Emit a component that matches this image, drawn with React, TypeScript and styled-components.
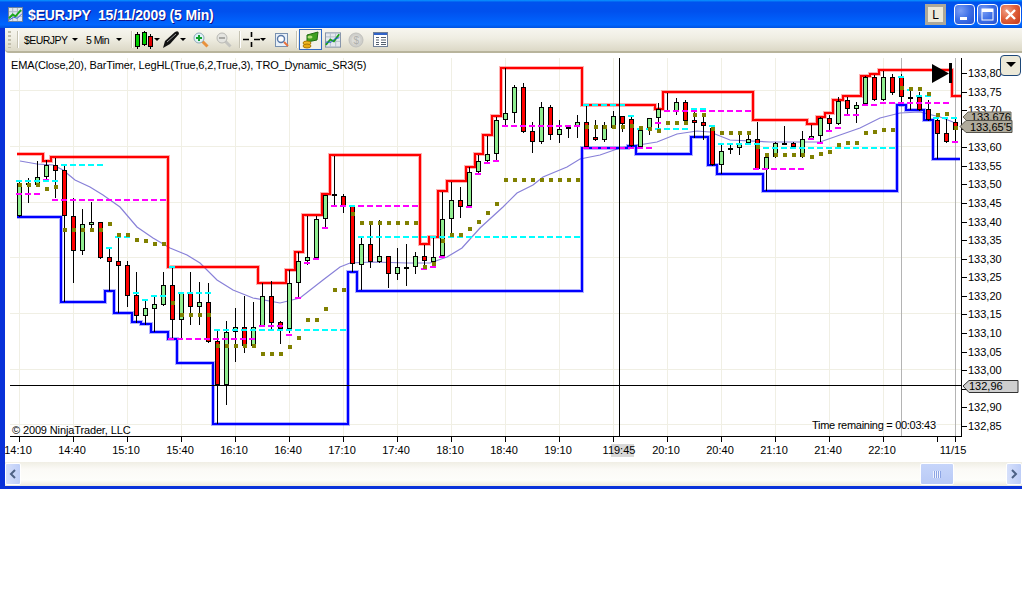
import React from 'react';
import styled, { createGlobalStyle } from 'styled-components';

const GlobalStyle = createGlobalStyle`
  html, body {
    margin: 0;
    background: #fff;
    font-family: "Liberation Sans", Arial, sans-serif;
  }
`;

const Window = styled.div`
  width: 1022px;
  height: 489px;
  box-sizing: border-box;
  display: flex;
  flex-direction: column;
  background: #0831d9;
  border-bottom: 3px solid #0831d9;
  overflow: hidden;
`;

const TitleBar = styled.div`
  height: 28px;
  flex: none;
  display: flex;
  align-items: center;
  padding: 1px 1px 0 8px;
  box-sizing: border-box;
  background: linear-gradient(180deg, #0997ff 0, #0053ee 8%, #0050ee 40%, #0066ff 88%, #0053e0 100%);
`;

const Title = styled.div`
  margin-left: 5px;
  flex: 1;
  color: #fff;
  font-size: 14px;
  font-weight: bold;
  letter-spacing: -0.15px;
  white-space: pre;
  text-shadow: 1px 1px 0 #0f1089;
`;

const LinkButton = styled.div`
  width: 21px;
  height: 21px;
  box-sizing: border-box;
  margin-right: 6px;
  border: 3px solid #aca899;
  background: #ece9d8;
  color: #000;
  font-size: 12px;
  display: flex;
  align-items: center;
  justify-content: center;
`;

const CaptionButton = styled.div<{ $close?: boolean }>`
  width: 21px;
  height: 21px;
  box-sizing: border-box;
  margin-left: 2px;
  border: 1px solid #fff;
  border-radius: 4px;
  background: ${(p) =>
    p.$close
      ? 'radial-gradient(circle at 30% 30%, #f0a088 0, #e0623c 45%, #c2371a 100%)'
      : 'radial-gradient(circle at 30% 30%, #7a9ef5 0, #3c6ee6 50%, #2450cf 100%)'};
  display: flex;
  align-items: center;
  justify-content: center;
`;

const Body = styled.div`
  flex: 1;
  margin-left: 5px;
  display: flex;
  flex-direction: column;
  background: #fff;
  min-height: 0;
`;

const Toolbar = styled.div`
  height: 25px;
  flex: none;
  box-sizing: border-box;
  display: flex;
  align-items: center;
  padding-left: 3px;
  border-bottom: 2px solid #b8b49c;
  border-bottom-left-radius: 4px;
  background: linear-gradient(180deg, #f7f6f0 0, #efede2 45%, #dcd8c6 100%);
  font-size: 10.5px;
  letter-spacing: -0.55px;
  color: #000;
`;

const Grip = styled.div`
  width: 3px;
  height: 17px;
  margin-right: 6px;
  background: repeating-linear-gradient(180deg, #c1bdab 0 2px, transparent 2px 4px);
`;

const Separator = styled.div<{ $gap: number }>`
  width: 1px;
  height: 17px;
  flex: none;
  margin-left: ${(p) => p.$gap}px;
  background: #c5c2b2;
  box-shadow: 1px 0 0 #fff;
`;

const Combo = styled.div<{ $left: number; $width: number }>`
  margin-left: ${(p) => p.$left}px;
  width: ${(p) => p.$width}px;
  flex: none;
  display: flex;
  align-items: center;
  justify-content: space-between;
  white-space: nowrap;
`;

const Caret = styled.span`
  width: 0;
  height: 0;
  flex: none;
  border-left: 3px solid transparent;
  border-right: 3px solid transparent;
  border-top: 3px solid #000;
`;

const ToolIcon = styled.div<{ $left: number; $width: number; $active?: boolean }>`
  margin-left: ${(p) => p.$left}px;
  width: ${(p) => p.$width}px;
  height: 21px;
  flex: none;
  box-sizing: border-box;
  display: flex;
  align-items: center;
  justify-content: center;
  border: ${(p) => (p.$active ? '1px solid #316ac5' : 'none')};
  background: ${(p) => (p.$active ? '#f3f1e8' : 'transparent')};
`;

const ChartPanel = styled.div`
  position: relative;
  flex: 1;
  min-height: 0;
`;

const ChartSvg = styled.svg`
  display: block;
  width: 1017px;
  height: 409px;
  font-family: "Liberation Sans", Arial, sans-serif;
  font-size: 11px;
`;

const ScrollMenu = styled.div`
  position: absolute;
  right: 1px;
  top: 2px;
  width: 21px;
  height: 21px;
  box-sizing: border-box;
  border: 1px solid #1d4778;
  border-radius: 4px;
  background: #ece9d8;
  display: flex;
  align-items: center;
  justify-content: center;
  &::after {
    content: '';
    border-left: 5px solid transparent;
    border-right: 5px solid transparent;
    border-top: 5px solid #000;
    margin-bottom: 2px;
  }
`;

const ScrollBar = styled.div`
  height: 24px;
  flex: none;
  display: flex;
  align-items: center;
  background: linear-gradient(180deg, #f0eee4 0, #fbfaf6 30%, #fdfdfa 75%, #ece9dc 100%);
`;

const ScrollButton = styled.div`
  width: 16px;
  height: 22px;
  box-sizing: border-box;
  flex: none;
  border: 1px solid #fff;
  border-radius: 2px;
  background: linear-gradient(90deg, #d6e0fb 0, #bdcdf7 100%);
  display: flex;
  align-items: center;
  justify-content: center;
`;

const ScrollTrack = styled.div`
  flex: 1;
  height: 100%;
  display: flex;
  align-items: center;
  justify-content: flex-end;
  padding-right: 52px;
`;

const Thumb = styled.div`
  width: 34px;
  height: 22px;
  box-sizing: border-box;
  border: 1px solid #fff;
  border-radius: 2px;
  background: linear-gradient(180deg, #c6d5fa 0, #b9caf6 100%);
  display: flex;
  align-items: center;
  justify-content: center;
`;

const ThumbGrip = styled.div`
  width: 8px;
  height: 7px;
  background: repeating-linear-gradient(90deg, #eef2fe 0 1px, #8ba4e4 1px 2px);
`;

type Candle = [number, number, number, number, 'g' | 'r'];

// high, body top, body bottom, low, colour; one bar every 9px from x=19.5
const candles: Candle[] = [
  [181, 183, 216, 217, 'g'], [178, 183, 184, 203, 'g'], [161, 177, 185, 187, 'g'], [160, 165, 177, 180, 'g'],
  [158, 165, 171, 198, 'r'], [166, 170, 216, 302, 'r'], [198, 216, 251, 283, 'r'], [209, 224, 251, 255, 'g'],
  [202, 222, 225, 230, 'g'], [222, 222, 258, 259, 'r'], [248, 257, 262, 291, 'r'], [237, 261, 266, 313, 'r'],
  [261, 265, 296, 307, 'r'], [272, 295, 316, 323, 'r'], [300, 308, 316, 325, 'g'], [296, 304, 309, 332, 'g'],
  [272, 285, 305, 306, 'g'], [267, 285, 320, 339, 'r'], [292, 293, 320, 339, 'g'], [272, 293, 307, 325, 'r'],
  [282, 302, 307, 325, 'g'], [283, 302, 342, 343, 'r'], [330, 341, 385, 424, 'r'], [321, 332, 385, 405, 'g'],
  [308, 327, 332, 362, 'g'], [296, 327, 346, 353, 'r'], [302, 327, 346, 347, 'g'], [283, 296, 326, 327, 'g'],
  [281, 296, 323, 329, 'r'], [321, 322, 329, 344, 'r'], [270, 283, 329, 333, 'g'], [252, 261, 283, 297, 'g'],
  [216, 257, 261, 265, 'g'], [216, 219, 258, 259, 'g'], [195, 195, 219, 228, 'g'], [156, 194, 196, 205, 'r'],
  [194, 196, 206, 213, 'r'], [206, 206, 264, 272, 'r'], [238, 244, 265, 290, 'g'], [225, 244, 262, 268, 'r'],
  [220, 256, 262, 263, 'g'], [256, 256, 274, 288, 'r'], [248, 267, 274, 280, 'g'], [244, 267, 267, 286, 'g'],
  [252, 256, 267, 274, 'g'], [245, 256, 261, 266, 'r'], [238, 257, 262, 266, 'g'], [192, 219, 256, 257, 'g'],
  [182, 200, 219, 235, 'g'], [187, 200, 207, 218, 'r'], [167, 172, 206, 207, 'g'], [155, 161, 172, 173, 'g'],
  [136, 154, 161, 162, 'g'], [117, 120, 154, 160, 'g'], [68, 113, 120, 125, 'g'], [85, 87, 113, 123, 'g'],
  [83, 87, 132, 133, 'r'], [122, 131, 142, 153, 'r'], [102, 107, 142, 144, 'g'], [105, 107, 135, 140, 'r'],
  [120, 129, 135, 143, 'g'], [125, 127, 129, 138, 'g'], [115, 122, 127, 138, 'g'], [106, 122, 147, 148, 'r'],
  [120, 137, 140, 141, 'r'], [122, 125, 140, 142, 'g'], [111, 116, 128, 129, 'g'], [116, 116, 124, 132, 'r'],
  [115, 119, 146, 147, 'r'], [127, 130, 147, 148, 'g'], [118, 118, 130, 135, 'g'], [103, 109, 118, 132, 'g'],
  [93, 110, 111, 112, 'g'], [98, 102, 112, 115, 'g'], [100, 102, 121, 122, 'r'], [108, 120, 123, 138, 'r'],
  [115, 122, 126, 140, 'r'], [125, 128, 165, 166, 'r'], [145, 151, 165, 174, 'g'], [143, 148, 150, 154, 'g'],
  [135, 144, 148, 155, 'g'], [135, 139, 143, 144, 'g'], [122, 139, 169, 170, 'r'], [153, 157, 169, 191, 'g'],
  [142, 143, 157, 158, 'g'], [126, 143, 144, 144, 'g'], [142, 143, 147, 148, 'r'], [131, 139, 157, 158, 'g'],
  [125, 136, 139, 140, 'g'], [117, 118, 136, 143, 'g'], [115, 118, 124, 131, 'r'], [97, 101, 124, 125, 'g'],
  [97, 100, 109, 115, 'r'], [102, 105, 109, 123, 'g'], [76, 77, 104, 105, 'g'], [75, 77, 100, 101, 'r'],
  [71, 77, 100, 101, 'g'], [74, 77, 93, 95, 'r'], [74, 77, 97, 103, 'r'], [88, 97, 98, 110, 'g'],
  [92, 97, 110, 111, 'r'], [100, 109, 120, 121, 'r'], [117, 120, 134, 159, 'r'], [117, 133, 142, 143, 'r'],
  [118, 122, 130, 142, 'r'],
];

const olive: number[] = [
  185, 185, 185, 189, 187, 230, 230, 230, 230, 230, 224, 235, 235, 240, 241, 244, 244, 303, 315, 315, 315, 315,
  346, 346, 346, 346, 346, 354, 354, 354, 347, 338, 320, 320, 309, 290, 290, 214, 223, 223, 223, 223, 223, 223,
  223, 267, 264, 241, 235, 235, 229, 222, 213, 204, 180, 180, 180, 180, 180, 180, 180, 180, 180, 127, 127, 127,
  127, 127, 126, 128, 129, 131, 123, 123, 123, 115, 115, 129, 133, 133, 133, 133, 147, 155, 155, 155, 155, 155,
  157, 154, 152, 145, 143, 143, 133, 132, 130, 130, 88, 89, 89, 94, 115, 114, 128,
];

const redSteps = [
  [17, 154], [43, 154], [43, 161], [51, 161], [51, 157], [168, 157], [168, 267], [258, 267], [258, 283], [286, 283],
  [286, 270], [295, 270], [295, 252], [303, 252], [303, 215], [322, 215], [322, 194], [330, 194], [330, 155],
  [420, 155], [420, 244], [429, 244], [429, 237], [438, 237], [438, 191], [447, 191], [447, 181], [466, 181],
  [466, 167], [475, 167], [475, 154], [483, 154], [483, 135], [492, 135], [492, 116], [501, 116], [501, 68],
  [582, 68], [582, 105], [655, 105], [655, 109], [663, 109], [663, 92], [753, 92], [753, 120], [807, 120],
  [807, 124], [817, 124], [817, 117], [825, 117], [825, 113], [833, 113], [833, 100], [843, 100], [843, 96],
  [861, 96], [861, 76], [870, 76], [870, 74], [879, 74], [879, 70], [952, 70], [952, 96], [961, 96],
];

const blueSteps = [
  [17, 217], [61, 217], [61, 302], [105, 302], [105, 291], [114, 291], [114, 313], [132, 313], [132, 322],
  [141, 322], [141, 324], [151, 324], [151, 332], [168, 332], [168, 339], [177, 339], [177, 363], [213, 363],
  [213, 424], [348, 424], [348, 272], [357, 272], [357, 291], [582, 291], [582, 148], [628, 148], [628, 146],
  [636, 146], [636, 154], [691, 154], [691, 137], [708, 137], [708, 165], [717, 165], [717, 174], [763, 174],
  [763, 191], [897, 191], [897, 105], [906, 105], [906, 110], [924, 110], [924, 120], [933, 120], [933, 159], [960, 159],
];

const ema = [
  [20, 161], [37, 164], [53, 165], [63, 170], [75, 180], [90, 187], [103, 195], [120, 207], [137, 227], [153, 238],
  [170, 248], [187, 255], [200, 263], [217, 280], [233, 290], [253, 298], [280, 303], [300, 298], [323, 280],
  [340, 267], [350, 263], [373, 262], [407, 263], [430, 263], [447, 257], [462, 248], [480, 228], [503, 207],
  [517, 193], [533, 185], [543, 177], [567, 167], [580, 159], [600, 155], [620, 148], [657, 142], [677, 134],
  [697, 131], [710, 132], [730, 140], [770, 142], [820, 142], [840, 135], [860, 128], [880, 118], [900, 113],
  [920, 112], [940, 117], [953, 122],
];

// y, x start, x end
const magenta = [
  [194, 16, 41], [180, 43, 50], [200, 52, 167], [339, 168, 257], [326, 259, 284], [335, 286, 293], [298, 295, 303],
  [263, 304, 311], [259, 313, 320], [228, 322, 329], [206, 331, 338], [206, 340, 420], [269, 421, 428], [267, 430, 437],
  [257, 439, 446], [207, 466, 473], [174, 475, 482], [163, 484, 491], [161, 493, 500], [126, 502, 582], [148, 583, 653],
  [123, 655, 662], [111, 664, 752], [169, 753, 805], [139, 808, 815], [143, 817, 823], [131, 826, 832], [128, 835, 842],
  [115, 844, 851], [115, 853, 860], [105, 862, 878], [103, 880, 950], [142, 952, 959],
];

const cyan = [
  [181, 16, 59], [165, 61, 104], [248, 106, 113], [237, 115, 131], [267, 169, 176], [293, 133, 140], [300, 142, 149],
  [296, 151, 167], [293, 178, 212], [330, 214, 347], [206, 349, 356], [237, 358, 581], [105, 583, 626], [116, 628, 635],
  [129, 637, 689], [109, 691, 707], [126, 709, 716], [144, 718, 761], [148, 763, 897], [77, 898, 905], [90, 907, 913],
  [96, 916, 932], [118, 933, 959],
];

const timeLabels = [
  '14:10', '14:40', '15:10', '15:40', '16:10', '16:40', '17:10', '17:40', '18:10', '18:40', '19:10', '', '20:10', '20:40',
  '21:10', '21:40', '22:10',
];

const priceLabels = Array.from({ length: 20 }, (_, i) => (133.8 - i * 0.05).toFixed(2).replace('.', ','));
// these two sit fully behind the price markers
const hiddenPrices = ['133,65', '132,95'];
const gridY = [90.5, 146.5, 202.5, 257.5, 313.5, 369.5, 424.5];
const toPoints = (pts: number[][]) => pts.map((p) => p.join(',')).join(' ');
const barX = (i: number) => 19.5 + 9 * i;
const priceY = (i: number) => Math.round(73 + i * 18.57);

const StepLine = ({ points, color }: { points: number[][]; color: string }) => (
  <>
    <polyline points={toPoints(points)} fill="none" stroke={color} strokeWidth={4} strokeOpacity={0.3} />
    <polyline points={toPoints(points)} fill="none" stroke={color} strokeWidth={2} />
  </>
);

const PriceChart = () => (
  <ChartSvg viewBox="5 53 1017 409">
    <g stroke="#f0efe4" shapeRendering="crispEdges">
      {gridY.map((y) => (
        <line key={y} x1={10} x2={961} y1={y} y2={y} />
      ))}
      {timeLabels.map((_, i) => (
        <line key={i} x1={19.5 + 54 * i} x2={19.5 + 54 * i} y1={58} y2={436} />
      ))}
    </g>
    <g stroke="#b4b4b4" shapeRendering="crispEdges">
      <line x1={901.5} x2={901.5} y1={58} y2={436} />
      <line x1={955.5} x2={955.5} y1={58} y2={436} />
    </g>

    <polyline points={toPoints(ema)} fill="none" stroke="#8880d8" strokeWidth={1.2} />
    <StepLine points={redSteps} color="#ff0000" />
    <StepLine points={blueSteps} color="#0000ff" />

    {candles.map(([high, top, bottom, low, side], i) => (
      <g key={i} shapeRendering="crispEdges" stroke="#000">
        <line x1={barX(i)} x2={barX(i)} y1={high} y2={low} />
        <rect
          x={barX(i) - 2}
          y={top + 0.5}
          width={4}
          height={Math.max(bottom - top - 1, 1)}
          fill={side === 'g' ? '#90ee90' : '#ff0000'}
        />
      </g>
    ))}

    <g shapeRendering="crispEdges" strokeWidth={2} strokeDasharray="6 3">
      {magenta.map(([y, a, b]) => (
        <line key={`${y}-${a}`} x1={a} x2={b} y1={y} y2={y} stroke="#ff00ff" />
      ))}
      {cyan.map(([y, a, b]) => (
        <line key={`${y}-${a}`} x1={a} x2={b} y1={y} y2={y} stroke="#00ffff" />
      ))}
    </g>
    <g fill="#808000" shapeRendering="crispEdges">
      {olive.map((y, i) => (
        <rect key={i} x={barX(i) - 2} y={y - 2} width={4} height={4} />
      ))}
    </g>

    <polygon points="932,64 949,73.5 932,83" fill="#000" />
    <rect x={949} y={63} width={3} height={20} fill="#000" />

    <g stroke="#000" shapeRendering="crispEdges">
      <line x1={619.5} x2={619.5} y1={58} y2={436} />
      <line x1={10} x2={962} y1={385.5} y2={385.5} />
      <line x1={961.5} x2={961.5} y1={58} y2={436} />
      <line x1={10} x2={962} y1={436.5} y2={436.5} />
      {priceLabels.map((_, i) => (
        <line key={i} x1={961} x2={967} y1={priceY(i) + 0.5} y2={priceY(i) + 0.5} />
      ))}
      {timeLabels.map((_, i) => (
        <line key={i} x1={19.5 + 54 * i} x2={19.5 + 54 * i} y1={436} y2={442} />
      ))}
      <line x1={937.5} x2={937.5} y1={436} y2={442} />
      <line x1={955.5} x2={955.5} y1={436} y2={442} />
    </g>

    <g fill="#000" fontSize={11}>
      {priceLabels.map((label, i) =>
        hiddenPrices.includes(label) ? null : (
          <text key={label} x={968} y={priceY(i) + 4}>
            {label}
          </text>
        ),
      )}
      {timeLabels.map((label, i) => (
        <text key={i} x={18 + 54 * i} y={454} textAnchor="middle">
          {label}
        </text>
      ))}
      <text x={953} y={454} textAnchor="middle">11/15</text>
    </g>

    <rect x={611} y={444} width={23} height={13} fill="#d8d8d8" />
    <text x={619} y={454} textAnchor="middle" fontSize={11}>119:45</text>

    <g fontSize={11} fill="#000">
      <text x={11} y={69} letterSpacing={-0.14}>EMA(Close,20), BarTimer, LegHL(True,6,2,True,3), TRO_Dynamic_SR3(5)</text>
      <text x={12} y={434} letterSpacing={-0.13}>© 2009 NinjaTrader, LLC</text>
      <text x={812} y={429} letterSpacing={-0.28}>Time remaining = 00:03:43</text>
    </g>

    <polygon points="963,117 968,112 1011,112 1011,122 968,122" fill="#b0ab9c" stroke="#6f6b5e" />
    <text x={971} y={121} fontSize={11}>133,676</text>
    <polygon points="960,126.5 966,120.5 1012,120.5 1012,132.5 966,132.5" fill="#b0ab9c" stroke="#55524a" />
    <text x={970} y={130.5} fontSize={11}>133,65'5</text>
    <polygon points="963,386 969,380.5 1018,380.5 1018,392.5 969,392.5" fill="#cfcfcf" stroke="#333" />
    <text x={969} y={390} fontSize={11}>132,96</text>
  </ChartSvg>
);

const AppIcon = () => (
  <svg width="15" height="15" viewBox="0 0 16 16">
    <rect x="0.5" y="0.5" width="15" height="15" fill="#dfe6ef" stroke="#6b7f99" />
    <path d="M1 5h14M1 10h14M5 1v14M10 1v14" stroke="#a8b4c4" />
    <polyline points="1,12 5,8 8,10 14,3" fill="none" stroke="#1aa51a" strokeWidth="2" />
    <polyline points="1,14 6,11 10,12 15,7" fill="none" stroke="#2b5ad8" />
  </svg>
);

const CandleIcon = () => (
  <svg width="20" height="18" viewBox="0 0 20 18">
    <path d="M3.5 1v17M10.5 0v15M16.5 3v15" stroke="#000" />
    <rect x="1.5" y="3.5" width="4" height="12" fill="#00d000" stroke="#000" />
    <rect x="8.5" y="1.5" width="4" height="12" fill="#00d000" stroke="#000" />
    <rect x="14.5" y="5.5" width="4" height="10" fill="#e00000" stroke="#000" />
  </svg>
);

const PenIcon = () => (
  <svg width="17" height="17" viewBox="0 0 17 17">
    <path d="M0 17 L2 10 L12 1 Q16 -1 16 3 L7 13 Z" fill="#111" />
    <path d="M4 11 L13 3" stroke="#999" />
  </svg>
);

const MagnifierIcon = ({ active }: { active?: boolean }) => (
  <svg width="16" height="16" viewBox="0 0 16 16">
    <path d="M9 9 L14.5 14.5" stroke={active ? '#e8913c' : '#c4c4c0'} strokeWidth="3" />
    <circle cx="6" cy="6" r="5" fill={active ? '#dff3f7' : '#e4e4e0'} stroke={active ? '#8fa8b8' : '#b8b8b4'} />
    <path d="M3 6h6" stroke={active ? '#12a030' : '#a8a8a4'} strokeWidth="2" />
    {active && <path d="M6 3v6" stroke="#12a030" strokeWidth="2" />}
  </svg>
);

const CrossIcon = () => (
  <svg width="17" height="17" viewBox="0 0 17 17">
    <path d="M0 8.5h6M11 8.5h6M8.5 1v5M8.5 11v5" stroke="#000" strokeWidth="1.6" />
  </svg>
);

const ZoomPageIcon = () => (
  <svg width="16" height="16" viewBox="0 0 16 16">
    <rect x="1.5" y="1.5" width="12" height="13" fill="#e8f0f8" stroke="#7890b0" />
    <circle cx="7" cy="7" r="3.5" fill="#fff" stroke="#5878a8" strokeWidth="1.4" />
    <path d="M10 10 L14 14" stroke="#e8703c" strokeWidth="2" />
  </svg>
);

const MoneyIcon = () => (
  <svg width="18" height="18" viewBox="0 0 18 18">
    <path d="M5 4 L16 1 L15 9 L5 11 Z" fill="#3fa020" stroke="#1f6a10" />
    <ellipse cx="8" cy="6" rx="2.5" ry="1.5" fill="#b6e07c" />
    <ellipse cx="5" cy="12" rx="4" ry="2" fill="#f0b820" stroke="#a87808" />
    <ellipse cx="5" cy="15" rx="4" ry="2" fill="#e8a810" stroke="#a87808" />
  </svg>
);

const ChartIcon = () => (
  <svg width="16" height="16" viewBox="0 0 18 17">
    <rect x="0.5" y="0.5" width="17" height="16" fill="#e4e8ee" stroke="#7c8ca4" />
    <path d="M1 5h16M1 10h16M6 1v15M12 1v15" stroke="#b0bac8" />
    <polyline points="1,14 6,8 10,10 16,2" fill="none" stroke="#18a018" strokeWidth="2" />
    <polyline points="1,11 7,11 11,7 16,6" fill="none" stroke="#2858d8" />
  </svg>
);

const CoinIcon = () => (
  <svg width="16" height="16" viewBox="0 0 16 16">
    <circle cx="8" cy="8" r="7" fill="#cfcfcb" stroke="#c0c0bc" />
    <circle cx="8" cy="8" r="4.5" fill="#dcdcd8" />
    <text x="8" y="11.5" fontSize="10" textAnchor="middle" fill="#b0b0ac">$</text>
  </svg>
);

const TableIcon = () => (
  <svg width="15" height="15" viewBox="0 0 15 15">
    <rect x="0.5" y="0.5" width="14" height="14" fill="#fff" stroke="#6f7f98" />
    <rect x="1" y="1" width="13" height="2" fill="#2f62c8" />
    <path d="M3 5.5h3M8 5.5h5M3 8h3M8 8h5M3 10.5h3M8 10.5h5M3 12.5h3M8 12.5h5" stroke="#54606f" />
  </svg>
);

const App = () => (
  <>
    <GlobalStyle />
    <Window>
      <TitleBar>
        <AppIcon />
        <Title>{'$EURJPY  15/11/2009 (5 Min)'}</Title>
        <LinkButton>L</LinkButton>
        <CaptionButton>
          <svg width="11" height="11" viewBox="0 0 11 11">
            <rect x="1" y="8" width="7" height="3" fill="#fff" />
          </svg>
        </CaptionButton>
        <CaptionButton>
          <svg width="13" height="13" viewBox="0 0 13 13">
            <rect x="1" y="1" width="11" height="11" fill="none" stroke="#fff" />
            <rect x="1" y="1" width="11" height="3" fill="#fff" />
          </svg>
        </CaptionButton>
        <CaptionButton $close>
          <svg width="13" height="13" viewBox="0 0 13 13">
            <path d="M2 2 L11 11 M11 2 L2 11" stroke="#fff" strokeWidth="2.4" />
          </svg>
        </CaptionButton>
      </TitleBar>
      <Body>
        <Toolbar>
          <Grip />
          <Separator $gap={0} />
          <Combo $left={6} $width={54}>
            $EURJPY <Caret />
          </Combo>
          <Combo $left={8} $width={36}>
            5 Min <Caret />
          </Combo>
          <Separator $gap={9} />
          <ToolIcon $left={2} $width={20}>
            <CandleIcon />
          </ToolIcon>
          <Caret />
          <ToolIcon $left={3} $width={17}>
            <PenIcon />
          </ToolIcon>
          <Caret />
          <ToolIcon $left={6} $width={18}>
            <MagnifierIcon active />
          </ToolIcon>
          <ToolIcon $left={5} $width={18}>
            <MagnifierIcon />
          </ToolIcon>
          <Separator $gap={6} />
          <ToolIcon $left={3} $width={17}>
            <CrossIcon />
          </ToolIcon>
          <Caret />
          <ToolIcon $left={7} $width={18}>
            <ZoomPageIcon />
          </ToolIcon>
          <Separator $gap={5} />
          <ToolIcon $left={2} $width={23} $active>
            <MoneyIcon />
          </ToolIcon>
          <ToolIcon $left={1} $width={20}>
            <ChartIcon />
          </ToolIcon>
          <ToolIcon $left={3} $width={20}>
            <CoinIcon />
          </ToolIcon>
          <ToolIcon $left={4} $width={20}>
            <TableIcon />
          </ToolIcon>
        </Toolbar>
        <ChartPanel>
          <PriceChart />
          <ScrollMenu />
        </ChartPanel>
        <ScrollBar>
          <ScrollButton>
            <svg width="8" height="10" viewBox="0 0 8 10">
              <path d="M6 1 L2 5 L6 9" fill="none" stroke="#4d6185" strokeWidth="2" />
            </svg>
          </ScrollButton>
          <ScrollTrack>
            <Thumb>
              <ThumbGrip />
            </Thumb>
          </ScrollTrack>
          <ScrollButton>
            <svg width="8" height="10" viewBox="0 0 8 10">
              <path d="M2 1 L6 5 L2 9" fill="none" stroke="#4d6185" strokeWidth="2" />
            </svg>
          </ScrollButton>
        </ScrollBar>
      </Body>
    </Window>
  </>
);

export default App;
